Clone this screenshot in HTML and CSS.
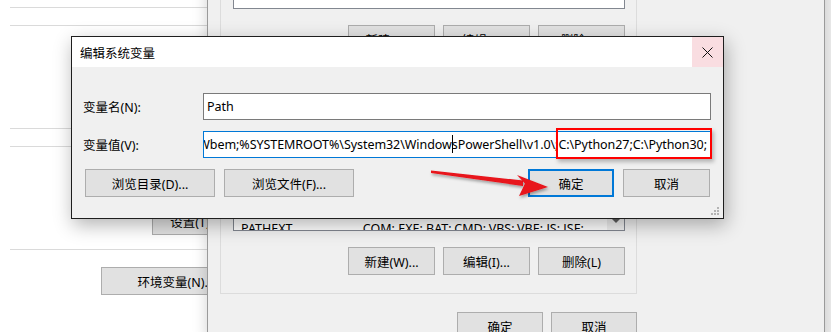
FILE: index.html
```html
<!DOCTYPE html>
<html lang="zh-CN">
<head>
    <meta charset="UTF-8">
    <title>编辑系统变量</title>
    <link rel="stylesheet" href="styles.css">
</head>
<body>
<div class="desktop">

    <!-- System properties (behind everything) -->
    <div class="sys-panel">
        <div class="rule first"></div>
        <div class="rule near"></div>
        <div class="rule far"></div>
        <div class="rule near"></div>
        <button class="btn settings-btn">设置(T)...</button>
        <div class="rule after-settings"></div>
        <button class="btn env-btn">环境变量(N)...</button>
    </div>

    <!-- Environment variables window -->
    <div class="env-window">
        <div class="group user-group">
            <div class="group-label">用户变量(U)</div>
            <div class="listview top-list"></div>
            <div class="btn-row">
                <button class="btn">新建(N)...</button>
                <button class="btn">编辑(E)...</button>
                <button class="btn">删除(D)</button>
            </div>
        </div>
        <div class="group sys-group">
            <div class="group-label">系统变量(S)</div>
            <div class="listview sys-list">
                <div class="list-rows">
                    <div class="list-row"><span class="var-name">PATHEXT</span><span>.COM;.EXE;.BAT;.CMD;.VBS;.VBE;.JS;.JSE;</span></div>
                </div>
                <div class="scrollbar"><span class="scroll-down"></span></div>
            </div>
            <div class="btn-row">
                <button class="btn">新建(W)...</button>
                <button class="btn">编辑(I)...</button>
                <button class="btn">删除(L)</button>
            </div>
        </div>
        <div class="footer-row">
            <button class="btn">确定</button>
            <button class="btn">取消</button>
        </div>
    </div>

    <!-- Edit system variable dialog -->
    <div class="edit-dialog">
        <div class="titlebar">
            <span class="title">编辑系统变量</span>
            <span class="close-btn">
                <svg width="11" height="11" viewBox="0 0 11 11"><path d="M0.5 0.5 L10.5 10.5 M10.5 0.5 L0.5 10.5" stroke="#111" stroke-width="1" fill="none"/></svg>
            </span>
        </div>
        <div class="dialog-body">
            <div class="field-row">
                <label>变量名(N):</label>
                <div class="text-box">Path</div>
            </div>
            <div class="field-row">
                <label>变量值(V):</label>
                <div class="text-box focused"><span class="value-text">\Wbem;%SYSTEMROOT%\System32\Window<span class="caret"></span>sPowerShell\v1.0\;C:\Python27;C:\Python30;</span></div>
            </div>
            <div class="dialog-buttons">
                <button class="btn wide">浏览目录(D)...</button>
                <button class="btn wide">浏览文件(F)...</button>
                <span class="spacer"></span>
                <button class="btn default">确定</button>
                <button class="btn">取消</button>
            </div>
        </div>
        <div class="highlight-box"></div>
        <svg class="grip" width="9" height="9" viewBox="0 0 9 9">
            <rect x="6" y="0" width="2" height="2" fill="#b4b4b4"/>
            <rect x="3" y="3" width="2" height="2" fill="#b4b4b4"/>
            <rect x="6" y="3" width="2" height="2" fill="#b4b4b4"/>
            <rect x="0" y="6" width="2" height="2" fill="#b4b4b4"/>
            <rect x="3" y="6" width="2" height="2" fill="#b4b4b4"/>
            <rect x="6" y="6" width="2" height="2" fill="#b4b4b4"/>
        </svg>
    </div>

    <!-- Red annotation arrow -->
    <svg class="arrow" width="831" height="332" viewBox="0 0 831 332">
        <defs>
            <filter id="arrowShadow" x="-10%" y="-50%" width="120%" height="200%">
                <feDropShadow dx="1" dy="2" stdDeviation="1.5" flood-color="#000" flood-opacity="0.35"/>
            </filter>
        </defs>
        <g filter="url(#arrowShadow)" fill="#e8121a">
            <polygon points="431,170.5 523,180.5 523,186 431,173"/>
            <polygon points="517,175 548,187 519,196 525,183.5"/>
        </g>
    </svg>

</div>
</body>
</html>
```

FILE: styles.css
```css
body {
    margin: 0;
    font-family: "Noto Sans", "Noto Sans CJK SC", sans-serif;
    font-size: 12.5px;
    color: #000;
    background: #f0f0f0;
}
.desktop {
    position: relative;
    width: 831px;
    height: 332px;
    overflow: hidden;
}
.btn {
    box-sizing: border-box;
    height: 28px;
    width: 87px;
    padding: 0;
    background: #e1e1e1;
    border: 1px solid #adadad;
    font: inherit;
    color: #000;
    white-space: nowrap;
}

/* system properties panel */
.sys-panel {
    position: absolute;
    left: 0;
    top: 0;
    width: 207px;
    height: 332px;
    background: #fff;
    padding-left: 10px;
    box-sizing: border-box;
    display: flex;
    flex-direction: column;
    align-items: flex-start;
}
.rule {
    height: 1px;
    width: 100%;
    background: #dadada;
    flex: none;
}
.rule.first { margin-top: 7px; }
.rule.near { margin-top: 17px; }
.rule.far { margin-top: 102px; }
.settings-btn {
    margin-top: 60px;
    margin-left: 142px;
    width: 86px;
    flex: none;
}
.rule.after-settings { margin-top: 14px; }
.env-btn {
    margin-top: 17px;
    margin-left: 91px;
    width: 150px;
    flex: none;
}

/* environment variables window */
.env-window {
    position: absolute;
    left: 207px;
    top: -120px;
    width: 618px;
    height: 460px;
    box-sizing: border-box;
    background: #f0f0f0;
    border-left: 1px solid #9a9a9a;
    border-right: 1px solid #9a9a9a;
    padding: 10px 0 0 12px;
    box-shadow: 0 0 14px rgba(0, 0, 0, 0.18);
}
.group {
    width: 417px;
    box-sizing: border-box;
    border: 1px solid #dcdcdc;
    padding: 0 11px 10px 12px;
}
.group + .group {
    margin-top: 7px;
}
.sys-group {
    padding-bottom: 18px;
}
.group-label {
    height: 20px;
    line-height: 20px;
}
.listview {
    box-sizing: border-box;
    background: #fff;
    border: 1px solid #828790;
}
.top-list {
    height: 98px;
}
.sys-list {
    height: 139px;
    display: flex;
    overflow: hidden;
}
.list-rows {
    flex: 1;
    display: flex;
    flex-direction: column;
    justify-content: flex-end;
    overflow: hidden;
}
.list-row {
    height: 20px;
    line-height: 20px;
    margin-bottom: -9px;
    padding-left: 7px;
    white-space: nowrap;
    display: flex;
}
.var-name {
    width: 119px;
    flex: none;
}
.scrollbar {
    width: 17px;
    background: #f0f0f0;
    display: flex;
    flex-direction: column;
    justify-content: flex-end;
}
.scroll-down {
    height: 17px;
    position: relative;
}
.scroll-down::after {
    content: "";
    position: absolute;
    left: 5px;
    top: 6px;
    border-left: 4px solid transparent;
    border-right: 4px solid transparent;
    border-top: 4px solid #606060;
}
.btn-row {
    display: flex;
    justify-content: flex-end;
    gap: 8px;
    margin-top: 16px;
}
.footer-row {
    width: 417px;
    display: flex;
    justify-content: flex-end;
    gap: 8px;
    margin-top: 18px;
}
.footer-row .btn {
    width: 86px;
}

/* edit dialog */
.edit-dialog {
    position: absolute;
    left: 71px;
    top: 36px;
    width: 653px;
    height: 183px;
    box-sizing: border-box;
    background: #f0f0f0;
    border: 1px solid #1e1e1e;
    box-shadow: 2px 6px 18px rgba(0, 0, 0, 0.3);
}
.titlebar {
    height: 30px;
    background: #fff;
    display: flex;
    align-items: center;
}
.title {
    flex: 1;
    padding-left: 8px;
}
.close-btn {
    width: 31px;
    height: 30px;
    background: #f9dde1;
    display: flex;
    align-items: center;
    justify-content: center;
}
.dialog-body {
    padding: 26px 12px 0 11px;
}
.field-row {
    display: grid;
    grid-template-columns: 120px 1fr;
    align-items: center;
    margin-bottom: 11px;
}
.text-box {
    box-sizing: border-box;
    height: 27px;
    line-height: 25px;
    background: #fff;
    border: 1px solid #7a7a7a;
    padding: 0 3px;
    white-space: nowrap;
    overflow: hidden;
}
.text-box.focused {
    border-color: #0078d7;
    display: flex;
    justify-content: flex-end;
}
.value-text {
    flex: none;
    letter-spacing: -0.06px;
}
.caret {
    display: inline-block;
    width: 1px;
    height: 18px;
    margin-right: -1px;
    background: #000;
    vertical-align: -4px;
}
.dialog-buttons {
    display: flex;
    gap: 9px;
    margin-top: 5px;
    padding-left: 2px;
    padding-right: 1px;
}
.btn.wide {
    width: 130px;
}
.spacer {
    flex: 1;
}
.btn.default {
    width: 86px;
    border: 2px solid #0078d7;
}
.highlight-box {
    position: absolute;
    left: 484px;
    top: 91px;
    width: 156px;
    height: 31px;
    box-sizing: border-box;
    border: 2px solid #f00;
    box-shadow: 2px 3px 4px rgba(0, 0, 0, 0.25);
}
.grip {
    position: absolute;
    right: 3px;
    bottom: 2px;
}
.arrow {
    position: absolute;
    left: 0;
    top: 0;
    pointer-events: none;
}
```
